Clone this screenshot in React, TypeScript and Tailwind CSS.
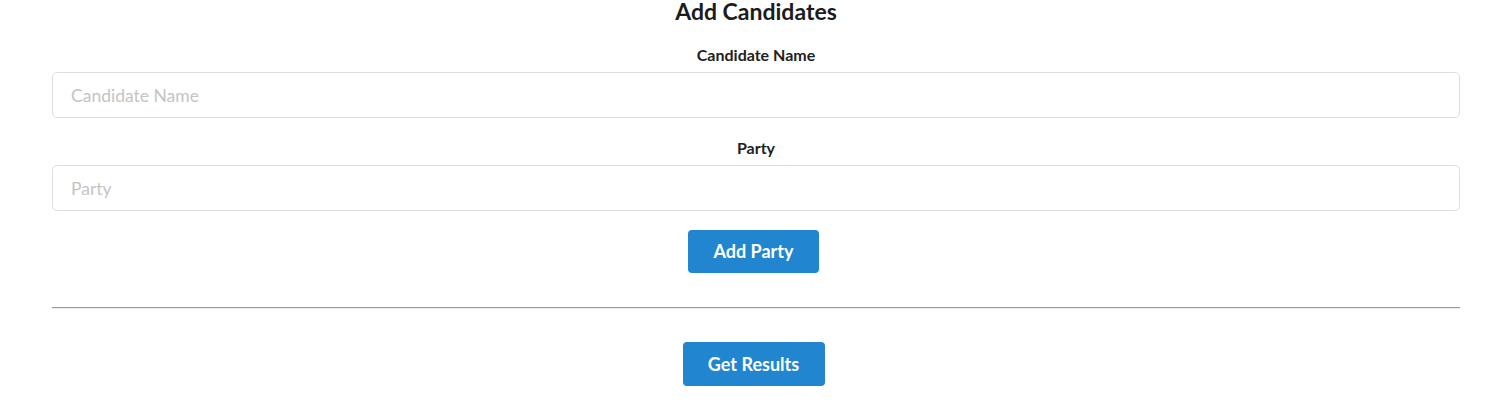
import { useState } from 'react';

export default function App() {
  const [name, setName] = useState('');
  const [party, setParty] = useState('');

  return (
    <div className="min-h-screen bg-white font-['Lato','Liberation_Sans',sans-serif] text-[#212121]">
      <div className="ml-[52px] mr-[50px] flex flex-col items-center">
        <h2 className="text-[23px] font-bold leading-[22px] text-[#1b1c1d]">Add Candidates</h2>

        {/* Candidate form */}
        <div className="w-full flex flex-col items-center mt-[24px]">
          <label className="text-[16px] font-bold leading-[18px] mb-[8px] text-[#212121]">Candidate Name</label>
          <input
            type="text"
            value={name}
            onChange={(e) => setName(e.target.value)}
            placeholder="Candidate Name"
            className="w-full h-[46px] px-[18px] text-[17.5px] border border-[#dededf] rounded-[5px] outline-none placeholder:text-[#c4c4c4]"
          />

          <label className="text-[16px] font-bold leading-[18px] mt-[21px] mb-[8px] text-[#212121]">Party</label>
          <input
            type="text"
            value={party}
            onChange={(e) => setParty(e.target.value)}
            placeholder="Party"
            className="w-full h-[46px] px-[18px] text-[17.5px] border border-[#dededf] rounded-[5px] outline-none placeholder:text-[#c4c4c4]"
          />

          <button className="mt-[19px] mr-[5px] h-[43px] w-[131px] rounded-[4px] bg-[#2185d0] text-white text-[18px] font-bold">
            Add Party
          </button>
        </div>

        <div className="w-full mt-[34px] border-t border-t-[#9a9a9a] border-b border-b-[#eeeeee]" />

        <button className="mt-[33px] mr-[5px] h-[44px] w-[142px] rounded-[4px] bg-[#2185d0] text-white text-[18px] font-bold">
          Get Results
        </button>
      </div>
    </div>
  );
}
